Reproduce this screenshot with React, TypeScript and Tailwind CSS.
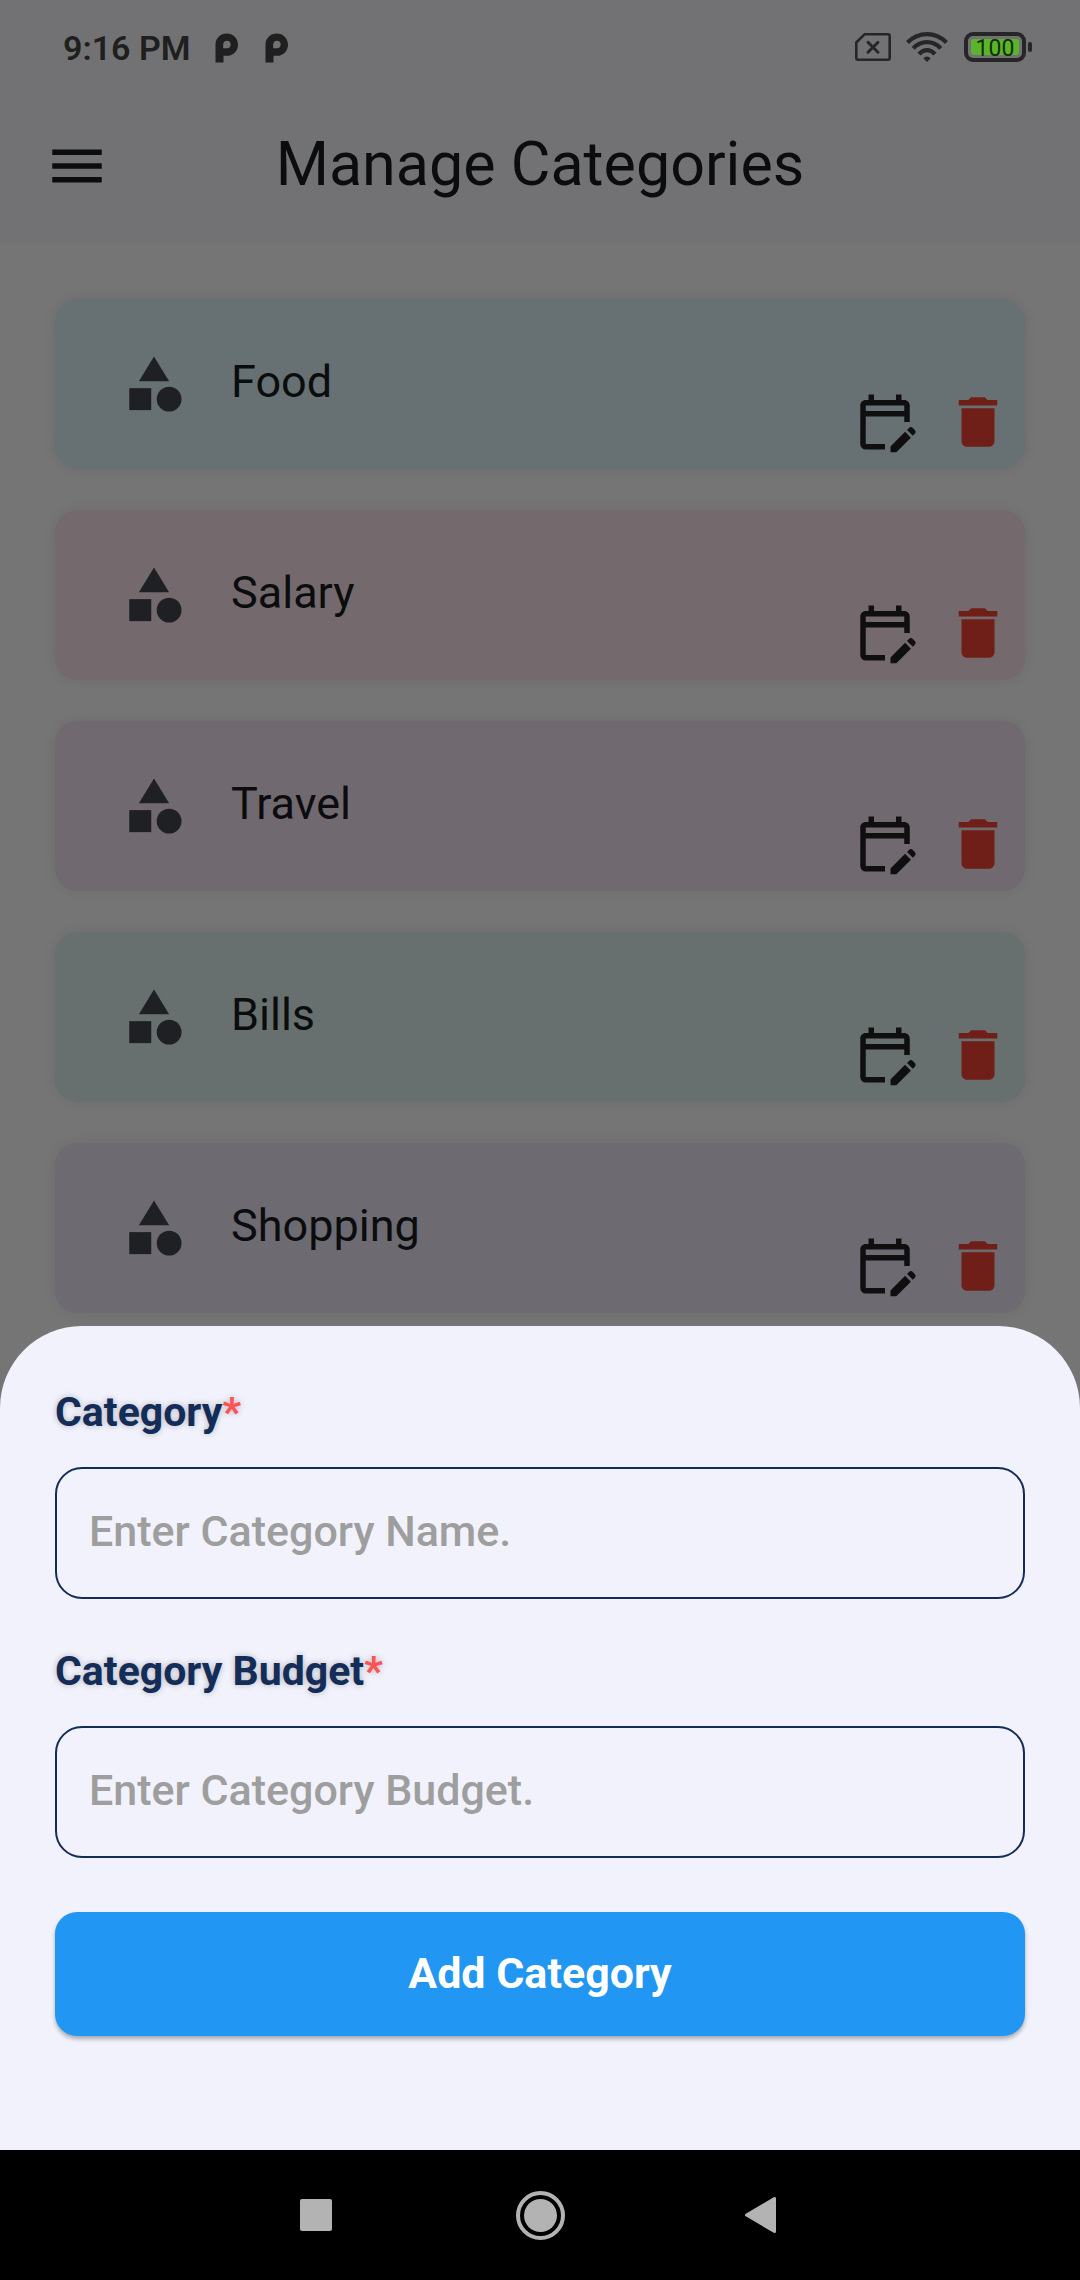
import { MdCategory, MdDelete, MdMenu, MdOutlineEditCalendar } from "react-icons/md";

const categories = [
  { name: "Food", tint: "bg-[#e0f7fa]" },
  { name: "Salary", tint: "bg-[#fce4ec]" },
  { name: "Travel", tint: "bg-[#f3e5f5]" },
  { name: "Bills", tint: "bg-[#e0f2f1]" },
  { name: "Shopping", tint: "bg-[#ede7f6]" },
];

function PLogo() {
  return (
    <svg viewBox="0 0 24 30" className="h-[30px] w-6" fill="currentColor" aria-hidden="true">
      <path
        fillRule="evenodd"
        d="M0.5 29.5V11.5C0.5 5.2 5.500 0.500 11.700 0.500S23 5.300 23 11.700S18 22.800 12 22.800H8.500V29.500ZM12 7.800C9.800 7.800 8.200 9.400 8.200 11.600V15.300H12C14.200 15.300 15.700 13.700 15.700 11.600S14.200 7.800 12 7.800Z"
      />
    </svg>
  );
}

function StatusBar() {
  return (
    <div className="relative z-10 flex h-[94px] items-start justify-between pt-8 pr-12 pl-[63px] text-[#1f1f1f]">
      <div className="flex items-center">
        <span className="text-[34px] leading-8 font-semibold">9:16 PM</span>
        <div className="ml-6 flex gap-[26px]">
          <PLogo />
          <PLogo />
        </div>
      </div>
      <div className="flex items-center text-[#262626]">
        <svg viewBox="0 0 36 30" className="h-[30px] w-9" fill="none" stroke="currentColor" aria-hidden="true">
          <path d="M9.500 2.300H33Q34.700 2.300 34.700 4V26Q34.700 27.700 33 27.700H3Q1.300 27.700 1.300 26V10.500Z" strokeWidth="2.600" strokeLinejoin="round" />
          <path d="M13 10.300L23 20.300M23 10.300L13 20.300" strokeWidth="3" strokeLinecap="round" />
        </svg>
        <svg viewBox="0 0 42 30" className="ml-[15px] h-[30px] w-[42px]" fill="none" stroke="currentColor" strokeWidth="4.200" aria-hidden="true">
          <path d="M1.500 10.500Q10 2.200 21 2.200T40.500 10.500" />
          <path d="M7.200 16.400Q13 10.200 21 10.200T34.800 16.400" />
          <path d="M13 22.200Q16.500 18.200 21 18.200T29 22.200" />
          <path d="M17.300 26.300Q21 22.800 24.700 26.300L21 30Z" fill="currentColor" stroke="none" />
        </svg>
        <div className="ml-4 flex items-center gap-[2px]">
          <div className="h-[30px] w-[62px] rounded-[9px] border-4 border-[#262626] p-[3px]">
            <div className="flex h-full items-center justify-center rounded-[3px] bg-[#5bb42c] pt-[2px] text-[23px] leading-none text-[#123006]">
              100
            </div>
          </div>
          <div className="h-[10px] w-1 rounded-[2px] bg-[#262626]" />
        </div>
      </div>
    </div>
  );
}

function CategoryCard({ name, tint }: { name: string; tint: string }) {
  return (
    <li className={`flex h-[170px] items-end rounded-[22px] pr-[14px] pl-[66px] shadow-[0_0_16px_rgba(0,0,0,0.08)] ${tint}`}>
      <div className="flex flex-1 items-center gap-11 self-center">
        <MdCategory className="size-[66px] text-[#44474e]" />
        <span className="pb-1 text-[45px] leading-[62px] text-[#191c20]">{name}</span>
      </div>
      <div className="flex gap-[27px] pb-[14px]">
        <button type="button" aria-label={`Edit ${name}`} className="text-[#212121]">
          <MdOutlineEditCalendar className="size-[66px]" />
        </button>
        <button type="button" aria-label={`Delete ${name}`} className="text-[#f44336]">
          <MdDelete className="size-[66px]" />
        </button>
      </div>
    </li>
  );
}

function Field({ id, label, placeholder }: { id: string; label: string; placeholder: string }) {
  return (
    <div>
      <label
        htmlFor={id}
        className="block text-[41px] leading-12 font-bold text-[#132c58] [text-shadow:0_0_6px_rgba(0,0,0,0.25)]"
      >
        {label}
        <span className="text-[#ff5252]">*</span>
      </label>
      <input
        id={id}
        type="text"
        placeholder={placeholder}
        className="mt-[31px] block h-[132px] w-full rounded-[27px] border-2 border-[#132c58] bg-transparent px-8 pb-1 text-[43px] font-medium text-[#132c58] outline-none placeholder:text-[#9e9e9e]"
      />
    </div>
  );
}

export default function App() {
  return (
    <div className="relative flex min-h-screen flex-col bg-white font-['Roboto',sans-serif]">
      <header className="bg-[#f8f9ff]">
        <StatusBar />
        <div className="flex h-[149px] items-center px-11 pb-[6px]">
          <button type="button" aria-label="Open menu" className="text-[#191c20]">
            <MdMenu className="size-[66px]" />
          </button>
          <h1 className="flex-1 pr-[66px] pb-1 text-center text-[61px] leading-[72px] text-[#191c20]">Manage Categories</h1>
        </div>
      </header>

      <main className="flex-1">
        <ul className="flex flex-col gap-[41px] px-[55px] pt-14">
          {categories.map((category) => (
            <CategoryCard key={category.name} name={category.name} tint={category.tint} />
          ))}
        </ul>
      </main>

      <div className="absolute inset-0 bg-black/54" />

      <section
        role="dialog"
        aria-label="Add category"
        className="absolute inset-x-0 bottom-[130px] rounded-t-[82px] bg-[#f1f2fb] px-[55px] pt-[62px] pb-[114px]"
      >
        <form onSubmit={(event) => event.preventDefault()}>
          <div className="flex flex-col gap-12">
            <Field id="category-name" label="Category" placeholder="Enter Category Name." />
            <Field id="category-budget" label="Category Budget" placeholder="Enter Category Budget." />
          </div>
          <button
            type="submit"
            className="mt-[54px] block h-[124px] w-full rounded-[22px] bg-[#2196f3] pb-[2px] text-[43px] font-bold text-white shadow-[0_3px_4px_rgba(0,0,0,0.3)]"
          >
            Add Category
          </button>
        </form>
      </section>

      <nav className="relative flex h-[130px] items-center justify-center gap-[175px] bg-black text-[#b3b3b3]">
        <button type="button" aria-label="Recent apps" className="flex w-[49px] justify-center">
          <span className="size-8 rounded-[2px] bg-current" />
        </button>
        <button type="button" aria-label="Home" className="flex size-[49px] items-center justify-center rounded-full border-4 border-current">
          <span className="size-[33px] rounded-full bg-current" />
        </button>
        <button type="button" aria-label="Back" className="flex w-[49px] justify-center pr-2">
          <svg viewBox="0 0 31 36" className="h-9 w-[31px]" fill="currentColor" stroke="currentColor" strokeWidth="3" strokeLinejoin="round" aria-hidden="true">
            <path d="M1.500 18L29.500 1.500V34.500Z" />
          </svg>
        </button>
      </nav>
    </div>
  );
}
